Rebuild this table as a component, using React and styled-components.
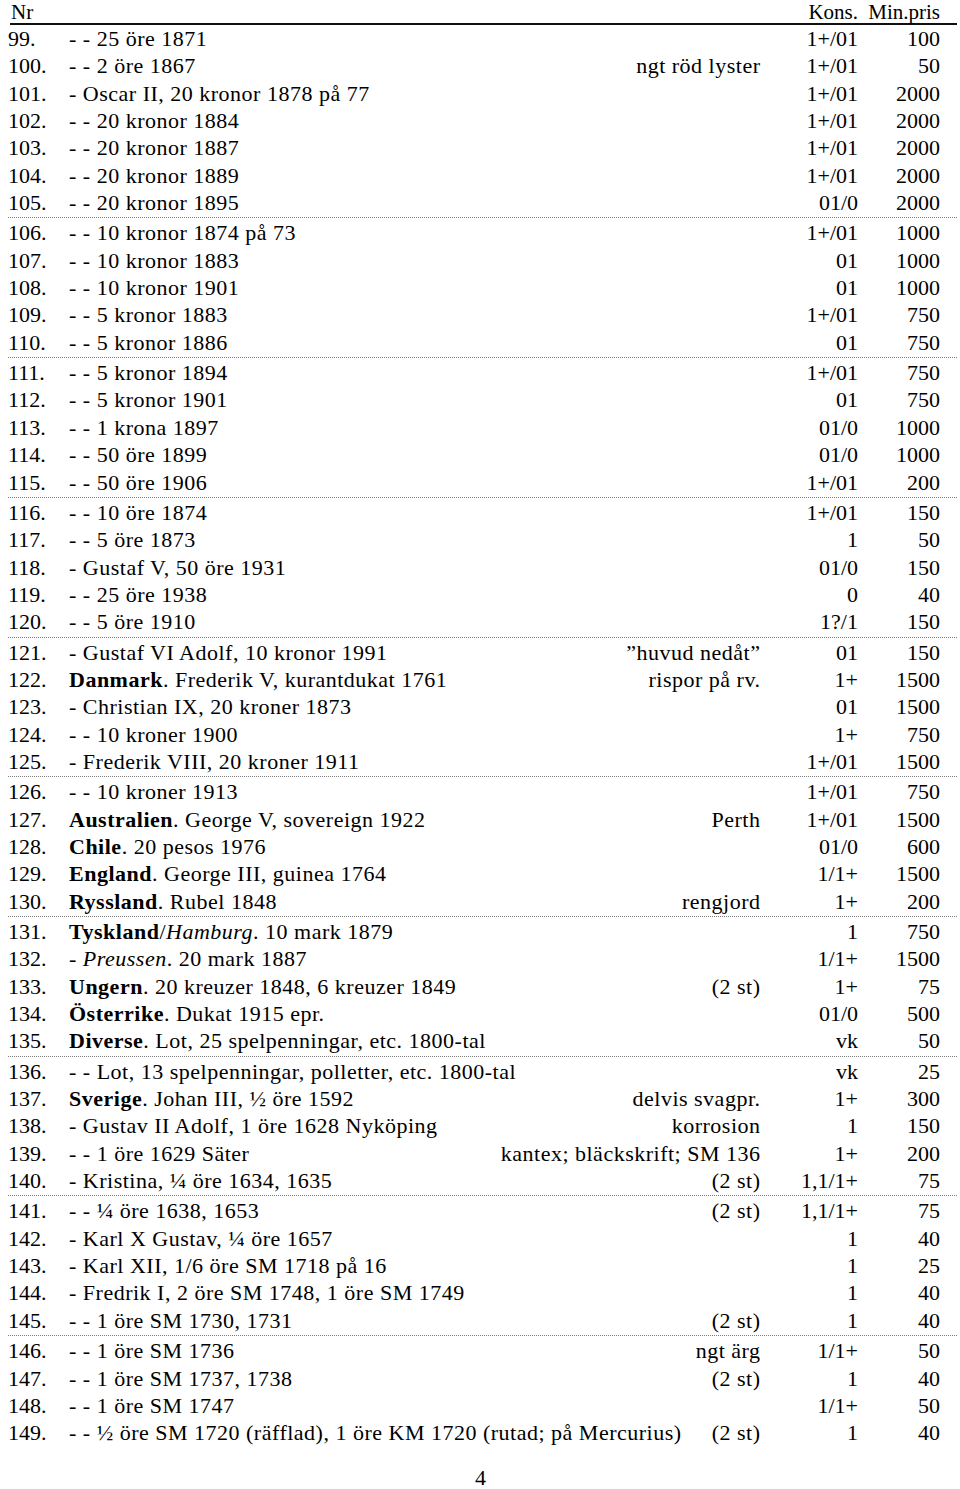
import React from "react";
import styled, { createGlobalStyle } from "styled-components";

const GlobalStyle = createGlobalStyle`
  html, body {
    margin: 0;
    padding: 0;
    background: #fff;
  }
  body {
    font-family: "Liberation Serif", "Times New Roman", serif;
    color: #000;
  }
`;

const Page = styled.div`
  width: 960px;
  box-sizing: border-box;
  padding: 0 3px 0 8px;
  font-size: 22px;
`;

const cols = "61px 1fr auto 98px 82px";

const Header = styled.div`
  display: grid;
  grid-template-columns: ${cols};
  padding-right: 17px;
  height: 23px;
  line-height: 24px;
  font-size: 21px;
  border-bottom: 2px solid #111;
  margin-left: 2px;
`;

const Group = styled.div`
  border-bottom: ${(p) => (p.$last ? "none" : "1px dotted #7a7a7a")};
  padding-bottom: ${(p) => (p.$last ? "0" : "1px")};
  margin-bottom: ${(p) => (p.$last ? "0" : "1px")};
`;

const Row = styled.div`
  display: grid;
  grid-template-columns: ${cols};
  padding-right: 17px;
  height: 27.35px;
  line-height: 27.35px;
  white-space: nowrap;
`;

const Cell = styled.div`
  text-align: ${(p) => p.$align || "left"};
  padding-left: ${(p) => p.$pad || 0}px;
`;

const Text = styled.div`
  text-align: ${(p) => p.$align || "left"};
  letter-spacing: 0.5px;
  margin-right: ${(p) => (p.$align === "right" ? "-0.5px" : "0")};
`;

const Num = styled.div`
  text-align: right;
`;

const Country = styled.b`
  font-weight: bold;
`;

const Region = styled.i`
  font-style: italic;
`;

const PageNo = styled.div`
  text-align: center;
  line-height: 24px;
  margin-top: 19px;
  margin-left: -4px;
`;

const groups = [
  [
    ["99.", "- - 25 öre 1871", "", "1+/01", "100"],
    ["100.", "- - 2 öre 1867", "ngt röd lyster", "1+/01", "50"],
    ["101.", "- Oscar II, 20 kronor 1878 på 77", "", "1+/01", "2000"],
    ["102.", "- - 20 kronor 1884", "", "1+/01", "2000"],
    ["103.", "- - 20 kronor 1887", "", "1+/01", "2000"],
    ["104.", "- - 20 kronor 1889", "", "1+/01", "2000"],
    ["105.", "- - 20 kronor 1895", "", "01/0", "2000"],
  ],
  [
    ["106.", "- - 10 kronor 1874 på 73", "", "1+/01", "1000"],
    ["107.", "- - 10 kronor 1883", "", "01", "1000"],
    ["108.", "- - 10 kronor 1901", "", "01", "1000"],
    ["109.", "- - 5 kronor 1883", "", "1+/01", "750"],
    ["110.", "- - 5 kronor 1886", "", "01", "750"],
  ],
  [
    ["111.", "- - 5 kronor 1894", "", "1+/01", "750"],
    ["112.", "- - 5 kronor 1901", "", "01", "750"],
    ["113.", "- - 1 krona 1897", "", "01/0", "1000"],
    ["114.", "- - 50 öre 1899", "", "01/0", "1000"],
    ["115.", "- - 50 öre 1906", "", "1+/01", "200"],
  ],
  [
    ["116.", "- - 10 öre 1874", "", "1+/01", "150"],
    ["117.", "- - 5 öre 1873", "", "1", "50"],
    ["118.", "- Gustaf V, 50 öre 1931", "", "01/0", "150"],
    ["119.", "- - 25 öre 1938", "", "0", "40"],
    ["120.", "- - 5 öre 1910", "", "1?/1", "150"],
  ],
  [
    ["121.", "- Gustaf VI Adolf, 10 kronor 1991", "\u201Dhuvud nedåt\u201D", "01", "150"],
    ["122.", <><Country>Danmark</Country>. Frederik V, kurantdukat 1761</>, "rispor på rv.", "1+", "1500"],
    ["123.", "- Christian IX, 20 kroner 1873", "", "01", "1500"],
    ["124.", "- - 10 kroner 1900", "", "1+", "750"],
    ["125.", "- Frederik VIII, 20 kroner 1911", "", "1+/01", "1500"],
  ],
  [
    ["126.", "- - 10 kroner 1913", "", "1+/01", "750"],
    ["127.", <><Country>Australien</Country>. George V, sovereign 1922</>, "Perth", "1+/01", "1500"],
    ["128.", <><Country>Chile</Country>. 20 pesos 1976</>, "", "01/0", "600"],
    ["129.", <><Country>England</Country>. George III, guinea 1764</>, "", "1/1+", "1500"],
    ["130.", <><Country>Ryssland</Country>. Rubel 1848</>, "rengjord", "1+", "200"],
  ],
  [
    ["131.", <><Country>Tyskland</Country>/<Region>Hamburg</Region>. 10 mark 1879</>, "", "1", "750"],
    ["132.", <>- <Region>Preussen</Region>. 20 mark 1887</>, "", "1/1+", "1500"],
    ["133.", <><Country>Ungern</Country>. 20 kreuzer 1848, 6 kreuzer 1849</>, "(2 st)", "1+", "75"],
    ["134.", <><Country>Österrike</Country>. Dukat 1915 epr.</>, "", "01/0", "500"],
    ["135.", <><Country>Diverse</Country>. Lot, 25 spelpenningar, etc. 1800-tal</>, "", "vk", "50"],
  ],
  [
    ["136.", "- - Lot, 13 spelpenningar, polletter, etc. 1800-tal", "", "vk", "25"],
    ["137.", <><Country>Sverige</Country>. Johan III, ½ öre 1592</>, "delvis svagpr.", "1+", "300"],
    ["138.", "- Gustav II Adolf, 1 öre 1628 Nyköping", "korrosion", "1", "150"],
    ["139.", "- - 1 öre 1629 Säter", "kantex; bläckskrift; SM 136", "1+", "200"],
    ["140.", "- Kristina, ¼ öre 1634, 1635", "(2 st)", "1,1/1+", "75"],
  ],
  [
    ["141.", "- - ¼ öre 1638, 1653", "(2 st)", "1,1/1+", "75"],
    ["142.", "- Karl X Gustav, ¼ öre 1657", "", "1", "40"],
    ["143.", "- Karl XII, 1/6 öre SM 1718 på 16", "", "1", "25"],
    ["144.", "- Fredrik I, 2 öre SM 1748, 1 öre SM 1749", "", "1", "40"],
    ["145.", "- - 1 öre SM 1730, 1731", "(2 st)", "1", "40"],
  ],
  [
    ["146.", "- - 1 öre SM 1736", "ngt ärg", "1/1+", "50"],
    ["147.", "- - 1 öre SM 1737, 1738", "(2 st)", "1", "40"],
    ["148.", "- - 1 öre SM 1747", "", "1/1+", "50"],
    ["149.", "- - ½ öre SM 1720 (räfflad), 1 öre KM 1720 (rutad; på Mercurius)", "(2 st)", "1", "40"],
  ],
];

export default function App() {
  return (
    <Page>
      <GlobalStyle />
      <Header>
        <Cell $pad={1}>Nr</Cell>
        <Cell />
        <Cell />
        <Cell $align="right">Kons.</Cell>
        <Cell $align="right">Min.pris</Cell>
      </Header>
      {groups.map((rows, gi) => (
        <Group key={gi} $last={gi === groups.length - 1}>
          {rows.map(([nr, desc, note, kons, price]) => (
            <Row key={nr}>
              <Cell>{nr}</Cell>
              <Text>{desc}</Text>
              <Text $align="right">{note}</Text>
              <Num>{kons}</Num>
              <Num>{price}</Num>
            </Row>
          ))}
        </Group>
      ))}
      <PageNo>4</PageNo>
    </Page>
  );
}
